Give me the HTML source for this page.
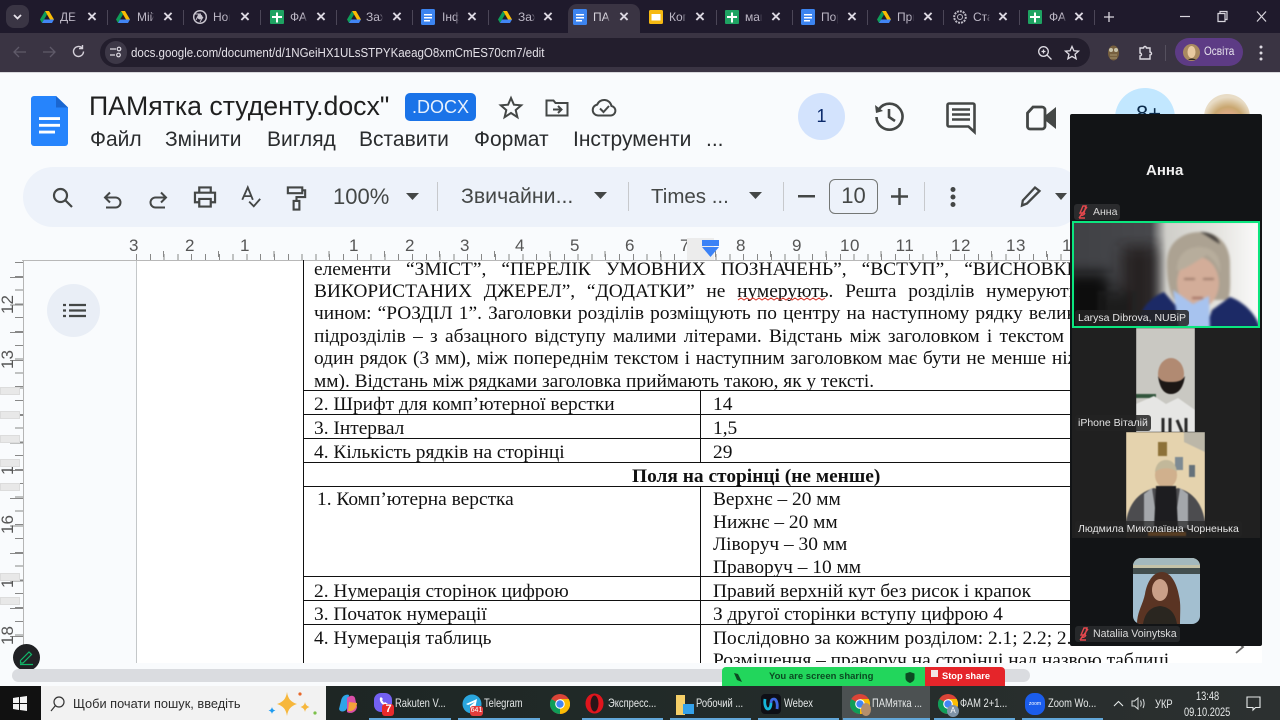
<!DOCTYPE html>
<html><head><meta charset="utf-8"><style>
*{box-sizing:border-box}
html,body{margin:0;padding:0;width:1280px;height:720px;overflow:hidden;background:#f9fbfd;font-family:"Liberation Sans","Noto Sans CJK SC",sans-serif}
.a{position:absolute;white-space:nowrap}
.t{position:absolute;font-size:12px;color:#bdb8c6;white-space:nowrap;top:10px;width:17px;overflow:hidden;-webkit-mask-image:linear-gradient(90deg,#000 80%,transparent)}
.x{position:absolute;top:7px;font-size:17px;line-height:20px;color:#dcd8e2;font-weight:bold}
.sep{position:absolute;top:10px;width:1px;height:15px;background:#4b4657}
.m{position:absolute;top:128px;font-size:21px;color:#2a2c2e;white-space:nowrap}
.tb{position:absolute;font-size:22px;color:#444746;white-space:nowrap}
.dv{position:absolute;top:182px;width:1px;height:29px;background:#c7c9cc}
.rn{position:absolute;top:236px;font-size:17px;color:#555;width:30px;text-align:center;letter-spacing:.5px}
.vn{position:absolute;left:-2px;width:20px;height:30px;font-size:17px;color:#555;line-height:20px;text-align:center;writing-mode:vertical-rl;transform:rotate(180deg)}
.chip{position:absolute;left:0;width:20px;height:8px;background:#e8e8e8;border:1px solid #dcdcdc}
.l{position:absolute;left:314px;font:19.4px "Liberation Serif",serif;color:#111;white-space:nowrap;line-height:22px;height:22px}
.j{text-align:justify;text-align-last:justify}
.c{position:absolute;font:19.4px "Liberation Serif",serif;color:#111;white-space:nowrap;line-height:22px}
.h{position:absolute;height:1px;left:303px;width:770px;background:#111}
.zl{position:absolute;font-size:10.5px;color:#e4e4e4;background:rgba(35,35,35,.85);padding:2px 3px;border-radius:3px;white-space:nowrap;line-height:12px}
.tk{position:absolute;top:696px;font-size:12px;color:#e6e9e9;white-space:nowrap;transform:scaleX(.78);transform-origin:0 50%}
.ul{position:absolute;top:718px;height:2px;background:#62a7d9}
svg{position:absolute;overflow:visible}
</style></head><body>

<!-- chrome -->
<div class="a" style="left:0;top:0;width:1280px;height:34px;background:#1f1a2c"></div>
<div class="a" style="left:0;top:33px;width:1280px;height:39px;background:#3a3443"></div>
<div class="a" style="left:0;top:72px;width:1280px;height:1px;background:#d8d8dc"></div>
<div class="a" style="left:6px;top:5px;width:23px;height:23px;background:#3a3544;border-radius:8px"></div>
<svg style="left:13px;top:14px" width="9" height="7"><path d="M1 1l3.500 3.500L8 1" fill="none" stroke="#e6e2ea" stroke-width="1.800"/></svg>
<div class="a" style="left:568px;top:4px;width:72px;height:30px;background:#3a3443;border-radius:9px 9px 0 0"></div>

<!-- tab icons -->
<svg width="0" height="0" style="left:0;top:0"><defs>
<symbol id="dr" viewBox="0 0 14 13"><path d="M5 0h4l5 8.500h-4z" fill="#fbbc04"/><path d="M5 0L0 8.500l2 3.500 5-8.500z" fill="#0f9d58"/><path d="M2 12h10l2-3.500H4z" fill="#4285f4"/></symbol>
<symbol id="dc" viewBox="0 0 14 16"><rect width="14" height="16" rx="1.500" fill="#3c84f0"/><path d="M3 5h8v1.500H3zM3 8h8v1.500H3zM3 11h6v1.500H3z" fill="#fff"/></symbol>
<symbol id="sh" viewBox="0 0 14 14"><rect width="14" height="14" rx="1" fill="#1ea362"/><path d="M6 2.500h2V6h4v2H8v4.500H6V8H2V6h4z" fill="#fff"/></symbol>
<symbol id="ch" viewBox="0 0 20 20"><circle cx="10" cy="10" r="10" fill="#db4437"/><path d="M10 10L1.300 5A10 10 0 0 0 10 20l5-8.700z" fill="#0f9d58"/><path d="M10 20a10 10 0 0 0 8.700-15H10z" fill="#fbbc04"/><circle cx="10" cy="10" r="4.800" fill="#fff"/><circle cx="10" cy="10" r="3.700" fill="#4285f4"/></symbol>
</defs></svg>
<svg style="left:40px;top:11px" width="14" height="13"><use href="#dr"/></svg>
<svg style="left:116px;top:11px" width="14" height="13"><use href="#dr"/></svg>
<svg style="left:193px;top:10px" width="14" height="14" viewBox="0 0 14 14"><circle cx="7" cy="7" r="6.300" fill="none" stroke="#c7c3cd" stroke-width="1.500"/><circle cx="7" cy="7" r="2.500" fill="#c7c3cd"/><path d="M2 4h6M7 12l3-5M3 10l3-6" stroke="#c7c3cd"/></svg>
<svg style="left:270px;top:10px" width="14" height="14"><use href="#sh"/></svg>
<svg style="left:347px;top:11px" width="14" height="13"><use href="#dr"/></svg>
<svg style="left:421px;top:9px" width="14" height="16"><use href="#dc"/></svg>
<svg style="left:498px;top:11px" width="14" height="13"><use href="#dr"/></svg>
<svg style="left:573px;top:9px" width="14" height="16"><use href="#dc"/></svg>
<svg style="left:649px;top:10px" width="14" height="14" viewBox="0 0 14 14"><rect width="14" height="14" rx="1.500" fill="#f6b912"/><rect x="2.500" y="4" width="9" height="6.500" fill="#fff"/></svg>
<svg style="left:725px;top:10px" width="14" height="14"><use href="#sh"/></svg>
<svg style="left:801px;top:9px" width="14" height="16"><use href="#dc"/></svg>
<svg style="left:877px;top:11px" width="14" height="13"><use href="#dr"/></svg>
<svg style="left:953px;top:10px" width="14" height="14" viewBox="0 0 14 14"><circle cx="7" cy="7" r="5.800" fill="none" stroke="#bdbac4" stroke-width="2" stroke-dasharray="2 1"/><circle cx="7" cy="7" r="2.500" fill="none" stroke="#bdbac4"/></svg>
<svg style="left:1028px;top:10px" width="14" height="14"><use href="#sh"/></svg>

<div class="t" style="left:60px">ДЕК</div><div class="t" style="left:137px">Мій</div><div class="t" style="left:213px">Нов</div><div class="t" style="left:290px">ФАМ</div><div class="t" style="left:366px">Захі</div><div class="t" style="left:442px">Інф</div><div class="t" style="left:518px">Захі</div><div class="t" style="left:593px;color:#d5d2da">ПАМ</div><div class="t" style="left:669px">Коп</div><div class="t" style="left:745px">маг</div><div class="t" style="left:821px">Пор</div><div class="t" style="left:897px">При</div><div class="t" style="left:973px">Ста</div><div class="t" style="left:1049px">ФАМ</div>
<div class="x" style="left:87px">×</div><div class="x" style="left:163px">×</div><div class="x" style="left:240px">×</div><div class="x" style="left:316px">×</div><div class="x" style="left:392px">×</div><div class="x" style="left:467px">×</div><div class="x" style="left:543px">×</div><div class="x" style="left:619px">×</div><div class="x" style="left:695px">×</div><div class="x" style="left:771px">×</div><div class="x" style="left:847px">×</div><div class="x" style="left:923px">×</div><div class="x" style="left:998px">×</div><div class="x" style="left:1074px">×</div>
<div class="sep" style="left:107px"></div><div class="sep" style="left:183px"></div><div class="sep" style="left:260px"></div><div class="sep" style="left:336px"></div><div class="sep" style="left:412px"></div><div class="sep" style="left:488px"></div><div class="sep" style="left:716px"></div><div class="sep" style="left:792px"></div><div class="sep" style="left:867px"></div><div class="sep" style="left:943px"></div><div class="sep" style="left:1019px"></div><div class="sep" style="left:1094px"></div>
<svg style="left:1103px;top:11px" width="12" height="12"><path d="M6 1v10M1 6h10" stroke="#d9d6de" stroke-width="1.300"/></svg>
<svg style="left:1180px;top:10px" width="90" height="14"><path d="M0 6.500h10" stroke="#d9d6de" stroke-width="1.200"/><path d="M38 3.500h7v8h-7zM40 3.500v-2h7v8h-2" fill="none" stroke="#d9d6de" stroke-width="1.200"/><path d="M77 1.500l9 10M86 1.500l-9 10" stroke="#d9d6de" stroke-width="1.200"/></svg>

<!-- address bar -->
<svg style="left:13px;top:44px" width="70" height="16"><path d="M1 8h12M6 3L1 8l5 5" fill="none" stroke="#5f5a69" stroke-width="1.300"/><path d="M30 8h12M37 3l5 5-5 5" fill="none" stroke="#5f5a69" stroke-width="1.300"/></svg>
<svg style="left:71px;top:44px" width="15" height="15" viewBox="0 0 15 15"><path d="M12.500 7.500a5 5 0 1 1-1.500-3.600M11.500 1v3.500H8" fill="none" stroke="#d5d1da" stroke-width="1.400"/></svg>
<div class="a" style="left:100px;top:38px;width:990px;height:29px;background:#231e2d;border-radius:15px"></div>
<div class="a" style="left:105px;top:41px;width:22px;height:23px;background:#3d3847;border-radius:12px"></div>
<svg style="left:109px;top:46px" width="14" height="13" viewBox="0 0 14 13"><path d="M1 3h6M1 9h5" stroke="#dedbe3" stroke-width="1.300"/><circle cx="10" cy="3" r="1.800" fill="none" stroke="#dedbe3" stroke-width="1.200"/><circle cx="9.500" cy="9" r="1.800" fill="none" stroke="#dedbe3" stroke-width="1.200"/></svg>
<div class="a" style="left:131px;top:45px;font-size:13px;color:#e4e1e8;transform:scaleX(.887);transform-origin:0 50%">docs.google.com/document/d/1NGeiHX1ULsSTPYKaeagO8xmCmES70cm7/edit</div>
<svg style="left:1037px;top:45px" width="50" height="16" viewBox="0 0 50 16"><circle cx="6.500" cy="6.500" r="4.800" fill="none" stroke="#dedbe3" stroke-width="1.300"/><path d="M10 10l4.500 4.500M4.500 6.500h4M6.500 4.500v4" stroke="#dedbe3" stroke-width="1.300"/><path d="M35 1.500l1.900 4.300 4.600.4-3.500 3 1.100 4.600-4.100-2.400-4.100 2.400 1.100-4.600-3.500-3 4.600-.4z" fill="none" stroke="#dedbe3" stroke-width="1.300"/></svg>
<svg style="left:1107px;top:44px" width="13" height="18" viewBox="0 0 13 18"><ellipse cx="6.500" cy="9" rx="5.500" ry="7.500" fill="#77603f"/><circle cx="4" cy="6" r="2" fill="#c9c3aa"/><circle cx="9" cy="6" r="2" fill="#c9c3aa"/><path d="M3 11h7M3 14h7" stroke="#a5946d"/></svg>
<svg style="left:1137px;top:45px" width="16" height="16" viewBox="0 0 16 16"><path d="M3 3h3.500a1.500 1.500 0 0 1 3 0H13v4a1.500 1.500 0 0 1 0 3v4H3v-3a1.500 1.500 0 0 0 0-3z" fill="none" stroke="#dedbe3" stroke-width="1.400"/></svg>
<div class="a" style="left:1165px;top:45px;width:1px;height:16px;background:#55505e"></div>
<div class="a" style="left:1175px;top:38px;width:68px;height:28px;background:#5d3b85;border-radius:14px"></div>
<svg style="left:1183px;top:44px" width="17" height="17" viewBox="0 0 17 17"><circle cx="8.500" cy="8.500" r="8.500" fill="#a98a60"/><ellipse cx="8.500" cy="8" rx="4" ry="6" fill="#e8c9a0"/><path d="M5 16c2-2 6-2 8 0" fill="#2b2620"/></svg>
<div class="a" style="left:1204px;top:46px;font-size:11.500px;color:#e8e4ee;transform:scaleX(.87);transform-origin:0 50%">Освіта</div>
<svg style="left:1259px;top:45px" width="4" height="16"><circle cx="2" cy="2" r="1.500" fill="#dedbe3"/><circle cx="2" cy="8" r="1.500" fill="#dedbe3"/><circle cx="2" cy="14" r="1.500" fill="#dedbe3"/></svg>

<!-- docs header -->
<svg style="left:31px;top:96px" width="37" height="50" viewBox="0 0 37 52" preserveAspectRatio="none"><path d="M3 0h22l12 12v37a3 3 0 0 1-3 3H3a3 3 0 0 1-3-3V3a3 3 0 0 1 3-3z" fill="#2684fc"/><path d="M25 0l12 12H25z" fill="#1a66d0"/><path d="M8 22h21v3H8zM8 29h21v3H8zM8 36h16v3H8z" fill="#fff"/></svg>
<div class="a" style="left:89px;top:91px;font-size:26.700px;color:#1f1f1f">ПАМятка студенту.docx"</div>
<div class="a" style="left:405px;top:93px;width:71px;height:28px;background:#1a73e8;border-radius:5px;color:#e6f0fd;font-size:18px;line-height:28px;text-align:center">.DOCX</div>
<svg style="left:499px;top:96px" width="24" height="23" viewBox="0 0 24 23"><path d="M12 2l2.900 6.700 7.300.6-5.500 4.800 1.700 7.100L12 17l-6.400 4.200 1.700-7.100L1.800 9.300l7.300-.6z" fill="none" stroke="#444746" stroke-width="2"/></svg>
<svg style="left:545px;top:97px" width="24" height="20" viewBox="0 0 24 20"><path d="M1.500 3.500h7l2 2.500h12v12.500h-21z" fill="none" stroke="#444746" stroke-width="2"/><path d="M8 12.500h8M13 9l3.500 3.500L13 16" fill="none" stroke="#444746" stroke-width="2"/></svg>
<svg style="left:591px;top:97px" width="27" height="20" viewBox="0 0 27 20"><path d="M7 18.500a5.500 5.500 0 0 1-.8-10.900 7.500 7.500 0 0 1 14.300 1.400 4.800 4.800 0 0 1-.5 9.500z" fill="none" stroke="#444746" stroke-width="2"/><path d="M9 11.500l3.500 3.500 5.500-6" fill="none" stroke="#444746" stroke-width="2"/></svg>
<div class="m" style="left:90px">Файл</div><div class="m" style="left:165px">Змінити</div><div class="m" style="left:267px">Вигляд</div><div class="m" style="left:359px">Вставити</div><div class="m" style="left:474px">Формат</div><div class="m" style="left:573px">Інструменти</div><div class="m" style="left:706px">...</div>

<div class="a" style="left:798px;top:93px;width:47px;height:47px;border-radius:50%;background:#d3e3fd;color:#0b2a6b;font-size:18px;line-height:47px;text-align:center">1</div>
<svg style="left:873px;top:100px" width="32" height="32" viewBox="0 0 32 32"><path d="M6 9a13 13 0 1 1-2.500 8" fill="none" stroke="#444746" stroke-width="2.600"/><path d="M2 5l1 8 7-2z" fill="#444746"/><path d="M16 9v8l6 4" fill="none" stroke="#444746" stroke-width="2.600"/></svg>
<svg style="left:946px;top:102px" width="31" height="32" viewBox="0 0 31 32"><path d="M3 1.500h24a1.500 1.500 0 0 1 1.500 1.500v27l-6-5.500H3A1.500 1.500 0 0 1 1.500 23V3A1.500 1.500 0 0 1 3 1.500z" fill="none" stroke="#444746" stroke-width="2.600"/><path d="M6 7.500h18M6 12.500h18M6 17.500h18" stroke="#444746" stroke-width="2.400"/></svg>
<svg style="left:1026px;top:105px" width="32" height="26" viewBox="0 0 32 26"><path d="M7 2h9a3 3 0 0 1 3 3v16a3 3 0 0 1-3 3H4a2.500 2.500 0 0 1-2.500-2.500V8z" fill="none" stroke="#444746" stroke-width="2.800"/><path d="M20 10l10-8v22l-10-8z" fill="#444746"/></svg>
<div class="a" style="left:1115px;top:88px;width:60px;height:60px;border-radius:50%;background:#c2e7ff"></div>
<div class="a" style="left:1136px;top:101px;font-size:22px;color:#0b2a4a">8+</div>
<div class="a" style="left:1204px;top:94px;width:46px;height:46px;border-radius:50%;background:radial-gradient(circle at 52% 62%,#d9a981 0,#d9a981 28%,#c9a770 42%,#e8dcc6 68%)"></div>

<!-- toolbar -->
<div class="a" style="left:23px;top:167px;width:1060px;height:60px;background:#edf2fa;border-radius:30px"></div>
<svg style="left:52px;top:187px" width="21" height="21" viewBox="0 0 21 21"><circle cx="8.500" cy="8.500" r="6.500" fill="none" stroke="#444746" stroke-width="2.200"/><path d="M13 13l7 7" stroke="#444746" stroke-width="2.200"/></svg>
<svg style="left:103px;top:191px" width="19" height="18" viewBox="0 0 19 18"><path d="M7 1.500L2 6.500l5 5M2 6.500h10.500a5 5 0 0 1 0 10H3" fill="none" stroke="#444746" stroke-width="2"/></svg>
<svg style="left:149px;top:191px" width="19" height="18" viewBox="0 0 19 18"><path d="M12 1.500l5 5-5 5M17 6.500H6.500a5 5 0 0 0 0 10H16" fill="none" stroke="#444746" stroke-width="2"/></svg>
<svg style="left:193px;top:186px" width="24" height="22" viewBox="0 0 24 23"><path d="M6 7V1.500h12V7M6 17H1.500V7h21v10H18" fill="none" stroke="#444746" stroke-width="2.300"/><path d="M6 13.500h12v8H6z" fill="none" stroke="#444746" stroke-width="2.300"/></svg>
<svg style="left:240px;top:186px" width="22" height="23" viewBox="0 0 22 25"><path d="M1.500 15L7.500 1.500 13 15M3.500 11h8" fill="none" stroke="#444746" stroke-width="2"/><path d="M9 17l5 5 7-8" fill="none" stroke="#444746" stroke-width="2"/></svg>
<svg style="left:286px;top:186px" width="21" height="25" viewBox="0 0 21 26"><path d="M1.500 1.500h15v6h-15zM16.500 4.500h3v7h-9v4" fill="none" stroke="#444746" stroke-width="2.200"/><path d="M7.500 15.500h6v9h-6z" fill="none" stroke="#444746" stroke-width="2.200"/></svg>
<div class="tb" style="left:333px;top:184px">100%</div>
<svg style="left:406px;top:193px" width="14" height="7"><path d="M0 0h13L6.500 7z" fill="#444746"/></svg>
<div class="dv" style="left:437px"></div>
<div class="tb" style="left:461px;top:184px;font-size:21.300px">Звичайни...</div>
<svg style="left:594px;top:192px" width="14" height="7"><path d="M0 0h13L6.500 7z" fill="#444746"/></svg>
<div class="dv" style="left:628px"></div>
<div class="tb" style="left:651px;top:185px;font-size:20.500px">Times ...</div>
<svg style="left:749px;top:192px" width="14" height="7"><path d="M0 0h13L6.500 7z" fill="#444746"/></svg>
<div class="dv" style="left:783px"></div>
<svg style="left:798px;top:195px" width="17" height="3"><rect width="17" height="2.500" fill="#444746"/></svg>
<div class="a" style="left:829px;top:179px;width:49px;height:35px;border:1.500px solid #747775;border-radius:6px;text-align:center;font-size:22px;line-height:32px;color:#444746">10</div>
<svg style="left:891px;top:188px" width="17" height="17"><path d="M8.500 0v17M0 8.500h17" stroke="#444746" stroke-width="2.500"/></svg>
<div class="dv" style="left:924px"></div>
<svg style="left:950px;top:187px" width="6" height="20"><circle cx="3" cy="2.500" r="2.500" fill="#444746"/><circle cx="3" cy="10" r="2.500" fill="#444746"/><circle cx="3" cy="17.500" r="2.500" fill="#444746"/></svg>
<svg style="left:1020px;top:186px" width="22" height="21" viewBox="0 0 22 21"><path d="M2 19.500l.8-5L15 1.500l4.500 3.500L7 17.500z" fill="none" stroke="#444746" stroke-width="2.300"/></svg>
<svg style="left:1055px;top:193px" width="13" height="7"><path d="M0 0h12L6 7z" fill="#444746"/></svg>

<!-- page -->
<div class="a" style="left:136px;top:260px;width:1126px;height:403px;background:#fff;border-left:1px solid #c4c7c9"></div>

<!-- rulers -->
<div class="a" style="left:136px;top:254px;width:940px;height:6px;background:repeating-linear-gradient(90deg,#888 0 1px,transparent 1px 13.8px)"></div>
<div class="a" style="left:163px;top:251px;width:900px;height:6px;background:repeating-linear-gradient(90deg,#888 0 1px,transparent 1px 55.2px)"></div>
<div class="a" style="left:22px;top:260px;width:1054px;height:1px;background:#b8b8b8"></div>
<div class="rn" style="left:119px">3</div><div class="rn" style="left:175px">2</div><div class="rn" style="left:230px">1</div><div class="rn" style="left:339px">1</div><div class="rn" style="left:395px">2</div><div class="rn" style="left:450px">3</div><div class="rn" style="left:505px">4</div><div class="rn" style="left:560px">5</div><div class="rn" style="left:615px">6</div><div class="rn" style="left:670px">7</div><div class="rn" style="left:726px">8</div><div class="rn" style="left:782px">9</div><div class="rn" style="left:835px">10</div><div class="rn" style="left:890px">11</div><div class="rn" style="left:946px">12</div><div class="rn" style="left:1001px">13</div><div class="rn" style="left:1057px">14</div>
<div class="a" style="left:687px;top:238px;width:27px;height:22px;background:#ececec"></div>
<div class="a" style="left:702px;top:240px;width:17px;height:6px;background:#3b82f6"></div>
<svg style="left:702px;top:247px" width="17" height="10"><path d="M0 0h17l-8.500 10z" fill="#3b82f6"/></svg>

<div class="a" style="left:23px;top:260px;width:1px;height:403px;background:#b5b5b5"></div>
<div class="a" style="left:15px;top:262px;width:8px;height:385px;background:repeating-linear-gradient(180deg,#888 0 1px,transparent 1px 13.8px)"></div>
<div class="a" style="left:10px;top:277px;width:13px;height:370px;background:repeating-linear-gradient(180deg,#888 0 1px,transparent 1px 27.6px)"></div>
<div class="vn" style="top:290px">12</div><div class="vn" style="top:345px">13</div><div class="vn" style="top:400px">1</div><div class="vn" style="top:455px">1</div><div class="vn" style="top:510px">16</div><div class="vn" style="top:568px">1</div><div class="vn" style="top:621px">18</div>
<div class="chip" style="top:387px"></div><div class="chip" style="top:411px"></div><div class="chip" style="top:435px"></div><div class="chip" style="top:459px"></div><div class="chip" style="top:483px"></div><div class="chip" style="top:573px"></div><div class="chip" style="top:597px"></div>

<div class="a" style="left:47px;top:284px;width:53px;height:53px;border-radius:50%;background:#e9eef6"></div>
<svg style="left:63px;top:304px" width="23" height="14"><path d="M6 1h17M6 6.500h17M6 12h17" stroke="#444746" stroke-width="2.200"/><path d="M0 1h3M0 6.500h3M0 12h3" stroke="#444746" stroke-width="2.200"/></svg>
<div class="a" style="left:13px;top:644px;width:27px;height:27px;border-radius:50%;background:#202124"></div>
<svg style="left:19px;top:650px" width="16" height="15" viewBox="0 0 16 15"><path d="M1.500 10.500L10 2l2.500 2.500L4 13H1.500zM1 14.500h13" fill="none" stroke="#12b76a" stroke-width="1.200"/></svg>

<!-- doc text -->
<div style="position:absolute;left:0;top:260px;width:1280px;height:403px;overflow:hidden">
<div style="position:absolute;left:0;top:-260px;width:1280px;height:720px">
<div class="l j" style="top:259px;width:780px">елементи “ЗМІСТ”, “ПЕРЕЛІК УМОВНИХ ПОЗНАЧЕНЬ”, “ВСТУП”, “ВИСНОВКИ”,</div>
<div class="l j" style="top:281px;width:781px">ВИКОРИСТАНИХ ДЖЕРЕЛ”, “ДОДАТКИ” не нумерують. Решта розділів нумеруються</div>
<div class="l j" style="top:303px;width:795px">чином: “РОЗДІЛ 1”. Заголовки розділів розміщують по центру на наступному рядку великими</div>
<div class="l j" style="top:326px;width:750px">підрозділів – з абзацного відступу малими літерами. Відстань між заголовком і текстом</div>
<div class="l j" style="top:348px;width:767px">один рядок (3 мм), між попереднім текстом і наступним заголовком має бути не менше ніж</div>
<div class="l" style="top:371px;letter-spacing:-.02px">мм). Відстань між рядками заголовка приймають такою, як у тексті.</div>
<svg style="left:738px;top:298px" width="88" height="4"><path d="M0 2l3-2 3 2 3-2 3 2 3-2 3 2 3-2 3 2 3-2 3 2 3-2 3 2 3-2 3 2 3-2 3 2 3-2 3 2 3-2 3 2 3-2 3 2 3-2 3 2 3-2 3 2 3-2 3 2 3-2" fill="none" stroke="#d93025"/></svg>
<div class="a" style="left:303px;top:260px;width:1px;height:403px;background:#111"></div>
<div class="a" style="left:700px;top:390px;width:1px;height:72px;background:#111"></div>
<div class="a" style="left:700px;top:486px;width:1px;height:177px;background:#111"></div>
<div class="h" style="top:390px"></div><div class="h" style="top:414px"></div><div class="h" style="top:438px"></div><div class="h" style="top:462px"></div><div class="h" style="top:486px"></div><div class="h" style="top:576px"></div><div class="h" style="top:600px"></div><div class="h" style="top:624px"></div>
<div class="c" style="left:314px;top:394px">2. Шрифт для комп’ютерної верстки</div><div class="c" style="left:713px;top:394px">14</div>
<div class="c" style="left:314px;top:418px">3. Інтервал</div><div class="c" style="left:713px;top:418px">1,5</div>
<div class="c" style="left:314px;top:442px">4. Кількість рядків на сторінці</div><div class="c" style="left:713px;top:442px">29</div>
<div class="c" style="left:632px;top:466px;font-weight:bold">Поля на сторінці (не менше)</div>
<div class="c" style="left:317px;top:489px">1. Комп’ютерна верстка</div>
<div class="c" style="left:713px;top:489px">Верхнє – 20 мм</div><div class="c" style="left:713px;top:512px">Нижнє – 20 мм</div><div class="c" style="left:713px;top:534px">Ліворуч – 30 мм</div><div class="c" style="left:713px;top:557px">Праворуч – 10 мм</div>
<div class="c" style="left:314px;top:581px">2. Нумерація сторінок цифрою</div><div class="c" style="left:713px;top:581px">Правий верхній кут без рисок і крапок</div>
<div class="c" style="left:314px;top:604px">3. Початок нумерації</div><div class="c" style="left:713px;top:604px">З другої сторінки вступу цифрою 4</div>
<div class="c" style="left:314px;top:628px">4. Нумерація таблиць</div><div class="c" style="left:713px;top:628px">Послідовно за кожним розділом: 2.1; 2.2; 2.3</div>
<div class="c" style="left:713px;top:650px">Розміщення – праворуч на сторінці над назвою таблиці</div>
</div></div>
<div class="a" style="left:1262px;top:232px;width:18px;height:431px;background:#f9fbfd"></div>
<svg style="left:1234px;top:640px" width="12" height="14"><path d="M2 1l7 6-7 6" fill="none" stroke="#666" stroke-width="1.800"/></svg>

<!-- scrollbar -->
<div class="a" style="left:12px;top:669px;width:1018px;height:13px;background:#dadce0;border-radius:7px"></div>

<!-- zoom panel -->
<div class="a" style="left:1070px;top:114px;width:192px;height:532px;background:#121416;border-radius:2px"></div>
<div class="a" style="left:1146px;top:162px;font-size:15px;font-weight:bold;color:#eee">Анна</div>
<div class="a" style="left:1074px;top:204px;width:46px;height:16px;background:#2a2b2d;border-radius:3px"></div>
<svg style="left:1077px;top:206px" width="12" height="13" viewBox="0 0 12 13"><path d="M6 0h3L7 7H3zM3 9c2 1 4 0 5-2M2 12h6M10 1L2 12" fill="none" stroke="#e5484d" stroke-width="1.400"/></svg>
<div class="a" style="left:1093px;top:206px;font-size:10.500px;color:#d8d8d8">Анна</div>

<!-- Larysa -->
<div class="a" style="left:1072px;top:221px;width:188px;height:107px;overflow:hidden;background:#333">
<svg style="left:0;top:0;filter:blur(1.2px)" width="188" height="107" viewBox="0 0 188 107">
<defs><linearGradient id="lg" x1="0" x2="1" y1="0" y2="0"><stop offset="0" stop-color="#404145"/><stop offset=".42" stop-color="#47484c"/><stop offset=".5" stop-color="#cfcec9"/><stop offset=".75" stop-color="#e2e1dc"/><stop offset="1" stop-color="#fbfbfb"/></linearGradient><filter id="bb"><feGaussianBlur stdDeviation="7"/></filter></defs>
<rect width="188" height="107" fill="url(#lg)"/>
<g filter="url(#bb)"><rect x="-8" y="52" width="45" height="65" fill="#08090c"/><rect x="50" y="25" width="34" height="85" fill="#262324"/><rect x="30" y="70" width="30" height="40" fill="#1b1b1e"/></g>
<path d="M95 42C95 20 112 11 128 11s30 10 30 32c0 16 1 28-2 36H102c-6-12-7-24-7-37z" fill="#aca292"/>
<path d="M128 11c10 0 18 4 20 12-6-3-12-8-20-12z" fill="#4a4540"/>
<ellipse cx="126" cy="62" rx="21" ry="26" fill="#d3ad99"/>
<path d="M105 50c10-2 22-12 30-16 6 4 11 10 13 18 2-16-6-26-21-26-14 0-23 10-22 24z" fill="#b7ad9c"/>
<path d="M112 58h11M131 58h11" stroke="#8c6c5e" stroke-width="1.500"/><path d="M120 77h11" stroke="#a06e62" stroke-width="2"/>
<path d="M65 107c2-18 12-30 27-36l12 14 6 22zM134 107l6-18 18-13c12 4 26 16 30 31z" fill="#1c2a66"/>
<path d="M101 69l20 14 16-8 1 32h-31z" fill="#a7c3ef"/>
</svg></div>
<div class="a" style="left:1072px;top:221px;width:188px;height:107px;border:2px solid #0be67f"></div>
<div class="zl" style="left:1075px;top:310px">Larysa Dibrova, NUBiP</div>

<!-- iPhone -->
<div class="a" style="left:1072px;top:328px;width:188px;height:104px;background:#202020"></div>
<div class="a" style="left:1136px;top:328px;width:59px;height:104px;overflow:hidden">
<svg style="left:0;top:0;filter:blur(.6px)" width="59" height="104" viewBox="0 0 59 104">
<rect width="59" height="104" fill="#c9c8c2"/><rect y="66" width="20" height="4" fill="#32553c"/>
<path d="M0 76l18-8 12 8 12-6 17 12v22H0z" fill="#e6e6e4"/>
<ellipse cx="35" cy="46" rx="13" ry="16" fill="#b18a72"/><path d="M22 48c2 14 7 18 13 18s12-4 14-18c-3 5-7 6-14 6s-11-1-13-6z" fill="#1c1715"/>
<path d="M27 90v14M34 90v14M41 92l5 12M50 90v14" stroke="#2a2a2a" stroke-width="3"/>
</svg></div>
<div class="zl" style="left:1075px;top:415px">iPhone Віталій</div>

<!-- Ludmyla -->
<div class="a" style="left:1072px;top:432px;width:188px;height:106px;background:#202020"></div>
<div class="a" style="left:1126px;top:432px;width:79px;height:106px;overflow:hidden">
<svg style="left:0;top:0;filter:blur(.6px)" width="79" height="106" viewBox="0 0 79 106">
<rect width="79" height="106" fill="#e5d3ae"/><path d="M58 0h21v20l-21-10z" fill="#bcb7a8"/>
<rect x="32" y="10" width="9" height="14" fill="#8d7138"/><rect x="49" y="25" width="8" height="13" fill="#7e8b93"/><rect x="63" y="33" width="6" height="12" fill="#65717a"/>
<ellipse cx="40" cy="43" rx="11" ry="13" fill="#d0b08d"/><path d="M29 40c1-9 6-12 11-12s10 3 11 12c-5-5-16-5-22 0z" fill="#c2b89a"/>
<path d="M0 90c3-20 14-30 28-34l12 4 12-4c14 4 24 14 27 34v16H0z" fill="#4c4c4f"/>
<path d="M18 62l8-6 6 40H18zM62 62l-8-6-6 40h14z" fill="#a4a7ab"/><path d="M30 54h20l2 42H28z" fill="#1d1d20"/>
<rect y="96" width="79" height="10" fill="#2a2622"/><rect x="22" y="100" width="38" height="4" fill="#d07a23"/>
</svg></div>
<div class="zl" style="left:1075px;top:521px;background:rgba(35,35,35,.7);font-size:10.500px">Людмила Миколаївна Чорненька</div>

<!-- Nataliia -->
<svg style="left:1133px;top:558px" width="67" height="66" viewBox="0 0 67 66">
<defs><clipPath id="av"><rect width="67" height="66" rx="8"/></clipPath></defs>
<g clip-path="url(#av)"><rect width="67" height="12" fill="#c4c2a8"/><rect y="0" width="67" height="7" fill="#a3b8bd"/><rect y="10" width="67" height="6" fill="#434f4f"/><rect y="16" width="67" height="50" fill="#a3bfd0"/>
<path d="M4 66c0-12 6-20 8-30 2-12 8-22 17-22s15 12 17 24c2 8 1 16 1 28z" fill="#5a3423"/>
<ellipse cx="27" cy="32" rx="8" ry="11" fill="#caa088"/><path d="M10 66c2-12 8-17 17-18 9 1 15 6 17 18z" fill="#2a2620"/></g>
</svg>
<div class="a" style="left:1075px;top:626px;width:105px;height:16px;background:#26282a;border-radius:3px"></div>
<svg style="left:1078px;top:628px" width="12" height="13" viewBox="0 0 12 13"><path d="M6 0h3L7 7H3zM3 9c2 1 4 0 5-2M2 12h6M10 1L2 12" fill="none" stroke="#e5484d" stroke-width="1.400"/></svg>
<div class="a" style="left:1093px;top:628px;font-size:10.600px;color:#dcdcdc">Nataliia Voinytska</div>

<!-- share bar -->
<div class="a" style="left:722px;top:667px;width:203px;height:19px;background:#22d65c;border-radius:4px 0 0 0"></div>
<div class="a" style="left:925px;top:667px;width:80px;height:19px;background:#e5252a;border-radius:0 4px 0 0"></div>
<svg style="left:733px;top:672px" width="10" height="11" viewBox="0 0 10 11"><path d="M1 1l4 1 4 8-5-2z" fill="#0c4a22"/></svg>
<div class="a" style="left:769px;top:671px;font-size:9.500px;font-weight:bold;color:#0b4a22">You are screen sharing</div>
<svg style="left:905px;top:672px" width="10" height="11" viewBox="0 0 10 11"><path d="M5 0l4.500 1.500V6c0 2.500-2 4-4.500 5-2.500-1-4.500-2.500-4.500-5V1.500z" fill="#0c4a22"/></svg>
<div class="a" style="left:931px;top:670px;width:7px;height:7px;background:#f2e6e6"></div>
<div class="a" style="left:942px;top:671px;font-size:9.300px;font-weight:bold;color:#fff">Stop share</div>

<!-- taskbar -->
<div class="a" style="left:0;top:686px;width:1280px;height:34px;background:linear-gradient(90deg,#1a2220,#212a28 50%,#2c3030)"></div>
<div class="a" style="left:0;top:686px;width:41px;height:34px;background:#111"></div>
<svg style="left:13px;top:696px" width="14" height="15"><path d="M0 2l6-1v6H0zM7 1l7-1v7H7zM0 8h6v6l-6-1zM7 8h7v7l-7-1z" fill="#f2f2f2"/></svg>
<div class="a" style="left:41px;top:686px;width:285px;height:34px;background:#f2f2f2"></div>
<svg style="left:50px;top:696px" width="15" height="16" viewBox="0 0 15 16"><circle cx="9" cy="6" r="5" fill="none" stroke="#333" stroke-width="1.200"/><path d="M5.500 9.500L1 15" stroke="#333" stroke-width="1.200"/></svg>
<div class="a" style="left:73px;top:696px;font-size:12.800px;color:#2c2c2c">Щоби почати пошук, введіть</div>
<svg style="left:266px;top:692px" width="54" height="26" viewBox="0 0 54 26"><path d="M21 0c1 7 4 10 10 12-6 2-9 5-10 12-1-7-4-10-10-12 6-2 9-5 10-12z" fill="#f6b73c"/><path d="M3 16c.5 2 1.500 3 3.500 3.500-2 .5-3 1.500-3.500 3.500-.5-2-1.500-3-3.500-3.500 2-.5 3-1.500 3.500-3.500z" fill="#1d9bf0" transform="translate(3 -1)"/><path d="M39 10c.5 3 2 4 4.500 5-2.500 1-4 2-4.500 5-.5-3-2-4-4.500-5 2.500-1 4-2 4.500-5z" fill="#f6b73c"/><circle cx="34" cy="2" r="1.600" fill="#e8682a"/><circle cx="49" cy="21" r="1.600" fill="#7cc04a"/></svg>
<svg style="left:338px;top:694px" width="20" height="20" viewBox="0 0 20 20"><path d="M3 7c1-6 6-7 8-6l-2 13c-1 4-7 5-8 1z" fill="#2fa4e7"/><path d="M9 4c3-3 7-3 8 0l2 9c-1 6-7 7-10 5z" fill="#d94fa8"/><path d="M11 8l8 1c0 5-4 9-9 8z" fill="#f4a13a"/></svg>
<svg style="left:373px;top:693px" width="22" height="25" viewBox="0 0 22 25"><rect x="1" y="0" width="18" height="19" rx="7" fill="#7360f2"/><path d="M7 5c-1 3 2 7 6 8l2-2-3-2-1 1-2-3 1-1-2-2z" fill="#fff"/><rect x="9" y="11" width="12" height="12" rx="3" fill="#e82a2a"/></svg>
<div class="a" style="left:382px;top:703px;width:13px;font-size:11px;font-weight:bold;color:#fff;text-align:center">7</div>
<div class="tk" style="left:395px">Rakuten V...</div>
<svg style="left:462px;top:694px" width="20" height="20" viewBox="0 0 20 20"><circle cx="10" cy="10" r="9.500" fill="#2aa6de"/><path d="M4 10l11-5-2 10-3-2-2 2v-3l5-4-7 3z" fill="#fff"/></svg>
<div class="a" style="left:470px;top:706px;width:13px;height:10px;background:#e23c3c;border-radius:3px;font-size:7px;color:#fff;text-align:center;line-height:10px">641</div>
<div class="tk" style="left:484px">Telegram</div>
<svg style="left:550px;top:694px" width="20" height="20"><use href="#ch"/></svg>
<svg style="left:585px;top:693px" width="19" height="21" viewBox="0 0 19 21"><ellipse cx="9.500" cy="10.500" rx="9" ry="10" fill="#e0151d"/><ellipse cx="9.500" cy="10.500" rx="4" ry="8" fill="#2a1518"/></svg>
<div class="tk" style="left:608px">Экспресс...</div>
<svg style="left:676px;top:694px" width="19" height="22" viewBox="0 0 19 22"><path d="M0 1h9v20H0z" fill="#f5cf68"/><rect x="7" y="10" width="11" height="10" fill="#35a2ea"/></svg>
<div class="tk" style="left:696px">Робочий ...</div>
<svg style="left:761px;top:694px" width="20" height="20" viewBox="0 0 20 20"><rect width="20" height="20" rx="4" fill="#0e0f16"/><path d="M4 5c-1 6 1 10 3 10s3-3 3-6" fill="none" stroke="#16b6d9" stroke-width="2.800"/><path d="M10 9c0-3 1-4 3-4s4 4 3 10" fill="none" stroke="#3e68e0" stroke-width="2.800"/></svg>
<div class="tk" style="left:784px">Webex</div>
<div class="a" style="left:842px;top:686px;width:88px;height:34px;background:#4c5152"></div>
<svg style="left:850px;top:694px" width="20" height="20"><use href="#ch"/></svg>
<div class="a" style="left:861px;top:703px;width:10px;height:13px;border-radius:50%;background:#b58f6d"></div>
<div class="tk" style="left:872px">ПАМятка ...</div>
<svg style="left:938px;top:694px" width="20" height="20"><use href="#ch"/></svg>
<div class="a" style="left:947px;top:705px;width:12px;height:12px;border-radius:50%;background:#8094a8;color:#fff;font-size:8px;text-align:center;line-height:12px">А</div>
<div class="tk" style="left:960px">ФАМ 2+1...</div>
<div class="a" style="left:1025px;top:693px;width:20px;height:22px;border-radius:9px;background:#1b5dec;color:#fff;font-size:5px;text-align:center;line-height:22px">zoom</div>
<div class="tk" style="left:1048px">Zoom Wo...</div>
<div class="ul" style="left:369px;width:82px"></div><div class="ul" style="left:458px;width:82px"></div><div class="ul" style="left:582px;width:81px"></div><div class="ul" style="left:670px;width:81px"></div><div class="ul" style="left:758px;width:81px"></div><div class="ul" style="left:843px;width:87px"></div><div class="ul" style="left:934px;width:81px"></div><div class="ul" style="left:1022px;width:81px"></div>
<svg style="left:1113px;top:700px" width="11" height="7"><path d="M1 6l4.500-4.500L10 6" fill="none" stroke="#e6e9e9" stroke-width="1.100"/></svg>
<svg style="left:1131px;top:696px" width="15" height="15" viewBox="0 0 15 15"><path d="M1 5h2.500L7 2v11L3.500 10H1z" fill="none" stroke="#d9dcdc"/><path d="M9.500 4.500c1 2 1 4 0 6M12 3c1.500 3 1.500 6 0 9" fill="none" stroke="#d9dcdc"/></svg>
<div class="a" style="left:1155px;top:697px;font-size:12px;color:#e6e9e9;transform:scaleX(.78);transform-origin:0 50%">УКР</div>
<div class="a" style="left:1196px;top:689px;font-size:12px;color:#e6e9e9;transform:scaleX(.77);transform-origin:0 50%">13:48</div>
<div class="a" style="left:1184px;top:705px;font-size:12px;color:#e6e9e9;transform:scaleX(.77);transform-origin:0 50%">09.10.2025</div>
<svg style="left:1246px;top:696px" width="15" height="15" viewBox="0 0 15 15"><path d="M1 1h13v10.500H9.500L7 14v-2.500H1z" fill="none" stroke="#e6e9e9" stroke-width="1.100"/></svg>
</body></html>
